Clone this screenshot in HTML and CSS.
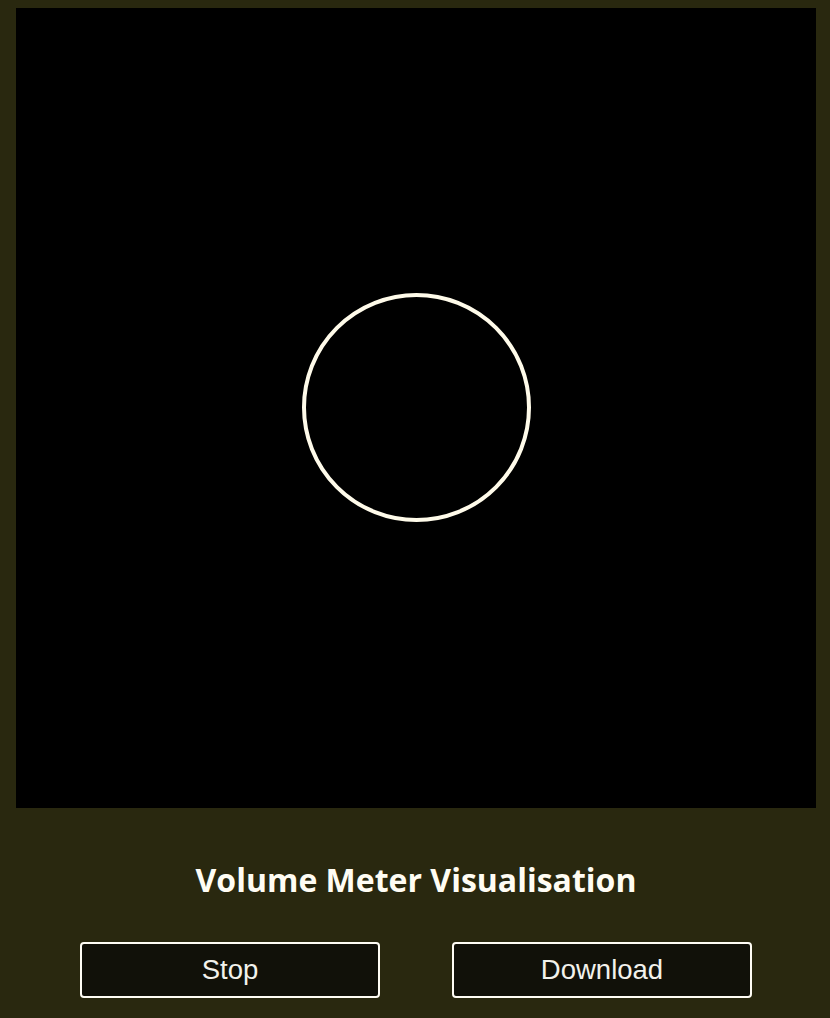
FILE: index.html
```html
<!DOCTYPE html>
<html>
<head>
<meta charset="utf-8">
<link rel="stylesheet" href="styles.css">
</head>
<body>
<main class="app">
  <div class="canvas">
    <div class="ring"></div>
  </div>
  <h1 class="title">Volume Meter Visualisation</h1>
  <div class="controls">
    <button class="btn">Stop</button>
    <button class="btn">Download</button>
  </div>
</main>
</body>
</html>
```

FILE: styles.css
```css
html, body {
  margin: 0;
  padding: 0;
  background: #29280f;
  height: 100%;
  overflow: hidden;
}
.app {
  width: 800px;
  margin: 8px 0 0 16px;
  display: flex;
  flex-direction: column;
  align-items: center;
}
.canvas {
  width: 800px;
  height: 800px;
  background: #000;
  display: flex;
  align-items: center;
  justify-content: center;
}
.ring {
  width: 221px;
  height: 221px;
  border: 4.5px solid #fffbea;
  border-radius: 50%;
  margin-top: -1px;
}
.title {
  margin: 50px 0 0;
  font-family: "Open Sans", sans-serif;
  font-weight: 700;
  font-size: 32px;
  line-height: normal;
  color: #fffdf4;
}
.controls {
  margin-top: 41px;
  display: flex;
  gap: 72px;
}
.btn {
  width: 300px;
  height: 56px;
  background: #111109;
  border: 2px solid #fffdf5;
  border-radius: 4px;
  color: #f2f2ec;
  font-family: "Liberation Sans", Arial, sans-serif;
  font-size: 27.5px;
  padding: 0;
}
```
